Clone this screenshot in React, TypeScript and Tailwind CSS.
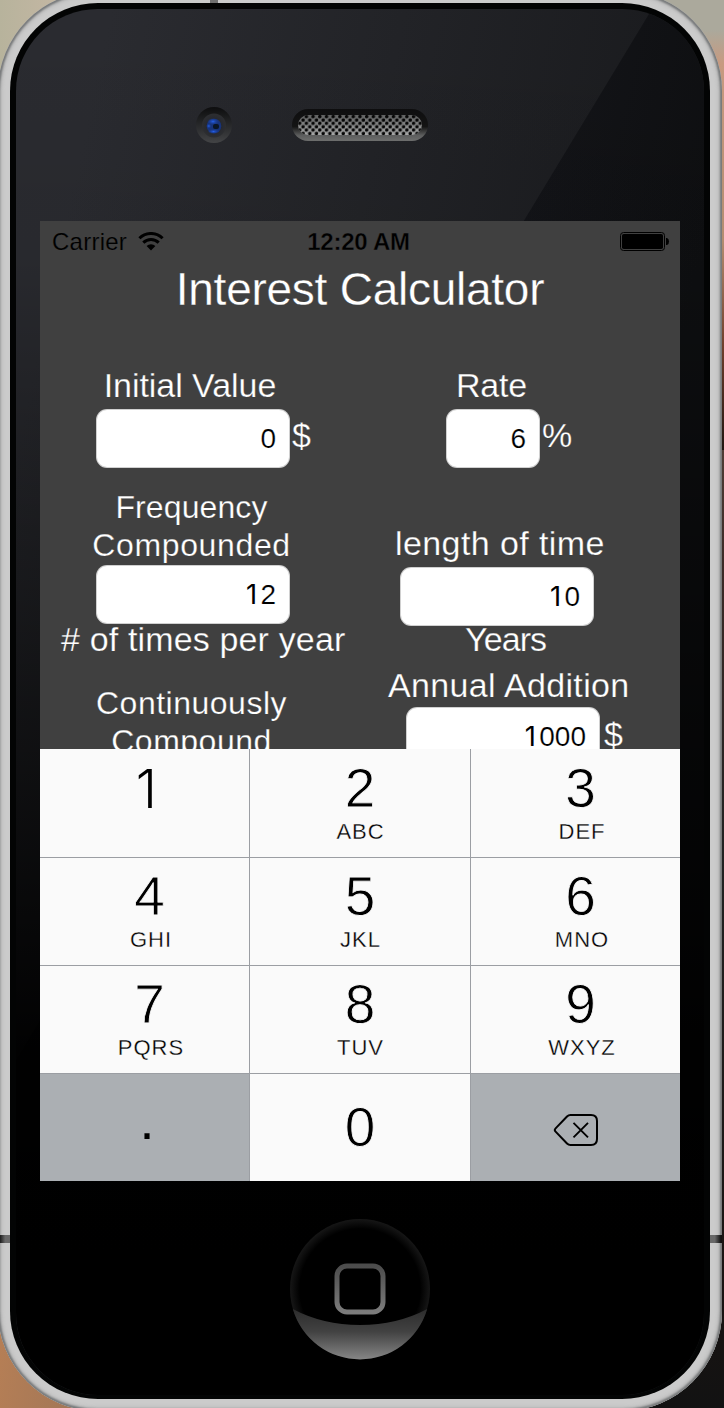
import React from "react";

const FONT = "font-['Liberation_Sans',Arial,sans-serif]";

// The footless "1" comes from Inter; every other figure uses the page font.
function Figures({ text }: { text: string }) {
  return (
    <span className="flex">
      {text.split("").map((c, i) =>
        c === "1" ? (
          <span
            key={i}
            className="w-[0.556em] pl-[0.03em] font-['Inter',sans-serif] text-[0.98em] font-normal [-webkit-text-stroke:0]"
          >
            1
          </span>
        ) : (
          <span key={i}>{c}</span>
        )
      )}
    </span>
  );
}

function Field({ value, width }: { value: string; width: string }) {
  return (
    <div
      className={`relative z-10 flex h-[59px] shrink-0 items-center justify-end rounded-[11px] border border-[#8a8a8a]/40 bg-white pr-[13px] text-[28px] leading-none text-black [-webkit-text-stroke:0.2px_#fff] ${width}`}
    >
      <Figures text={value} />
    </div>
  );
}

const THIN = "[-webkit-text-stroke:0.25px_#404040]";
const LABEL = `whitespace-nowrap text-[34px] leading-[40px] ${THIN}`;
const LABEL_SM = `whitespace-nowrap text-[32px] leading-[38px] ${THIN}`;

function WifiIcon() {
  return (
    <svg className="h-[19px] w-[26px]" viewBox="0 0 26 19">
      <path d="M13 18.5 L8.6 13.9 A6.4 6.4 0 0 1 17.4 13.9 Z" fill="#000" />
      <path d="M5.3 10.6 A10.9 10.9 0 0 1 20.7 10.6" fill="none" stroke="#000" strokeWidth="3" />
      <path d="M1.4 6.2 A16.6 16.6 0 0 1 24.6 6.2" fill="none" stroke="#000" strokeWidth="3" />
    </svg>
  );
}

function BatteryIcon() {
  return (
    <svg className="h-[19px] w-[50px]" viewBox="0 0 50 19">
      <rect x="0.5" y="0.5" width="44" height="18" rx="3" fill="none" stroke="#000" />
      <rect x="2" y="2" width="41" height="15" rx="1.8" fill="#000" />
      <path d="M46 6 h1 q2 0.5 2 3.5 q0 3 -2 3.5 h-1 Z" fill="#000" />
    </svg>
  );
}

function BackspaceIcon() {
  return (
    <svg className="h-[34px] w-[46px]" viewBox="0 0 46 34" fill="none" stroke="#000" strokeWidth="2">
      <path
        d="M17.5 2 H38 Q44 2 44 8 V26 Q44 32 38 32 H17.5 Q15.5 32 14 30.5 L2.6 18.6 Q1 17 2.6 15.4 L14 3.5 Q15.5 2 17.5 2 Z"
        strokeLinejoin="round"
      />
      <path d="M20.5 9.8 L35 24.3 M35 9.8 L20.5 24.3" strokeWidth="1.9" />
    </svg>
  );
}

function StatusBar() {
  return (
    <div className="flex h-[40px] items-center text-[24px] leading-none text-black">
      <div className="flex w-[213px] items-center pl-[12px]">
        <span className="w-[86px] pt-[2px] tracking-[0.25px] [-webkit-text-stroke:0.2px_#404040]">Carrier</span>
        <WifiIcon />
      </div>
      <div className="flex-1 pt-[2px] text-center font-bold tracking-[-0.25px] whitespace-nowrap [-webkit-text-stroke:0.4px_#404040]">
        12:20 AM
      </div>
      <div className="flex w-[216px] justify-end pr-[10px]">
        <BatteryIcon />
      </div>
    </div>
  );
}

function Form() {
  return (
    <div className="flex text-white">
      <div className="flex w-[300px] shrink-0 flex-col pt-[48px]">
        <div className={`${LABEL} mb-[4px] text-center tracking-[-0.05px]`}>Initial Value</div>
        <div className="flex pl-[56px]">
          <Field value="0" width="w-[194px]" />
          <span className={`${LABEL} ml-[2px] mt-[6px]`}>$</span>
        </div>
        <div className={`${LABEL_SM} mt-[20px] pl-[3px] text-center`}>
          <span className="tracking-[0.1px]">Frequency</span>
          <br />
          <span className="tracking-[0.65px]">Compounded</span>
        </div>
        <div className="mt-[1px] flex pl-[56px]">
          <Field value="12" width="w-[194px]" />
        </div>
        <div className={`${LABEL} -mt-[5px] pl-[21px] tracking-[0.15px]`}># of times per year</div>
        <div className={`${LABEL_SM} mt-[25px] pl-[3px] text-center tracking-[0.5px]`}>
          Continuously
          <br />
          Compound
        </div>
      </div>
      <div className="flex w-[340px] flex-col pt-[48px]">
        <div className={`${LABEL} mb-[4px] pl-[116px] tracking-[-0.2px]`}>Rate</div>
        <div className="flex pl-[106px]">
          <Field value="6" width="w-[94px]" />
          <span className={`${LABEL} ml-[2px] mt-[6px]`}>%</span>
        </div>
        <div className={`${LABEL} mt-[55px] pl-[55px] tracking-[0.4px]`}>length of time</div>
        <div className="mt-[4px] flex pl-[60px]">
          <Field value="10" width="w-[194px]" />
        </div>
        <div className={`${LABEL} -mt-[7px] pl-[125px] tracking-[-0.9px]`}>Years</div>
        <div className={`${LABEL} mt-[6px] pl-[48px] tracking-[0.35px]`}>Annual Addition</div>
        <div className="mt-[2px] flex pl-[66px]">
          <Field value="1000" width="w-[194px]" />
          <span className={`${LABEL} ml-[4px] mt-[7px]`}>$</span>
        </div>
      </div>
    </div>
  );
}

const KEYS: [string, string][] = [
  ["1", ""],
  ["2", "ABC"],
  ["3", "DEF"],
  ["4", "GHI"],
  ["5", "JKL"],
  ["6", "MNO"],
  ["7", "PQRS"],
  ["8", "TUV"],
  ["9", "WXYZ"],
];

const DIGIT = "text-[55px] leading-[60px] [-webkit-text-stroke:0.8px_#fafafa]";
const DIGIT_ONE = "-ml-[6px] pt-[2px] font-['Inter',sans-serif] text-[54px] leading-[58px] font-light";

function Keypad() {
  return (
    <div className="grid h-[432px] grid-cols-[210px_221px_209px] grid-rows-4 bg-[#fafafa] text-black">
      {KEYS.map(([digit, letters], i) => (
        <div
          key={digit}
          className={`flex flex-col items-center ${i > 2 ? "border-t border-[#9b9ea3] pt-[8px]" : "pt-[9px]"} ${
            i % 3 < 2 ? "border-r border-r-[#9b9ea3]" : ""
          } ${i % 3 !== 1 ? "pl-[10px]" : ""}`}
        >
          <span className={digit === "1" ? DIGIT_ONE : DIGIT}>{digit}</span>
          <span
            className={`mt-[1px] text-[22px] leading-[26px] tracking-[1px] [-webkit-text-stroke:0.3px_#fafafa] ${
              i % 3 !== 1 ? "pl-[3px]" : "pl-[1px]"
            }`}
          >
            {letters}
          </span>
        </div>
      ))}
      <div className="flex justify-center border-t border-r border-[#9b9ea3] bg-[#abafb3] pt-[16px] pl-[5px] text-[54px] leading-[60px]">
        .
      </div>
      <div className="flex justify-center border-t border-r border-[#9b9ea3] pt-[23px]">
        <span className={DIGIT}>0</span>
      </div>
      <div className="border-t border-[#9b9ea3] bg-[#abafb3] pt-[39px] pl-[82px]">
        <BackspaceIcon />
      </div>
    </div>
  );
}

function Glass() {
  return (
    <svg className="absolute inset-0 h-[1396px] w-[700px]" viewBox="10 3 700 1396">
      <defs>
        <linearGradient id="lit" gradientUnits="userSpaceOnUse" x1="100" y1="60" x2="660" y2="180">
          <stop offset="0" stopColor="#2a2b30" />
          <stop offset="0.5" stopColor="#222327" />
          <stop offset="1" stopColor="#1a1b1e" />
        </linearGradient>
        <linearGradient id="shade" gradientUnits="userSpaceOnUse" x1="524" y1="200" x2="704" y2="240">
          <stop offset="0" stopColor="#131418" />
          <stop offset="1" stopColor="#0e0f11" />
        </linearGradient>
        <linearGradient id="fade" x1="0" y1="0" x2="0" y2="1">
          <stop offset="0" stopColor="#000" stopOpacity="0" />
          <stop offset="0.18" stopColor="#000" stopOpacity="0.05" />
          <stop offset="0.75" stopColor="#000" stopOpacity="0.95" />
          <stop offset="0.9" stopColor="#000" />
        </linearGradient>
        <clipPath id="pane">
          <rect x="16" y="9" width="688" height="1386" rx="82" />
        </clipPath>
      </defs>
      <g clipPath="url(#pane)">
        <rect x="16" y="9" width="688" height="1386" fill="url(#lit)" />
        <path d="M652 9 L704 9 V1395 H16 V1060 Z" fill="url(#shade)" />
        <rect x="16" y="9" width="688" height="1386" fill="url(#fade)" />
      </g>
    </svg>
  );
}

function Camera() {
  return (
    <svg className="h-[36px] w-[36px]" viewBox="0 0 36 36">
      <defs>
        <linearGradient id="lensRim" x1="0" y1="0" x2="0" y2="1">
          <stop offset="0" stopColor="#0d0d0e" />
          <stop offset="0.5" stopColor="#27282a" />
          <stop offset="1" stopColor="#434446" />
        </linearGradient>
        <radialGradient id="lens">
          <stop offset="0" stopColor="#16223c" />
          <stop offset="0.55" stopColor="#26282e" />
          <stop offset="1" stopColor="#2d2e31" />
        </radialGradient>
        <radialGradient id="glint">
          <stop offset="0" stopColor="#2560ea" />
          <stop offset="1" stopColor="#173a92" stopOpacity="0" />
        </radialGradient>
      </defs>
      <circle cx="18" cy="18" r="18" fill="url(#lensRim)" />
      <circle cx="18" cy="18.5" r="12" fill="url(#lens)" />
      <circle cx="18" cy="19" r="7.3" fill="#17337a" />
      <ellipse cx="17" cy="14.5" rx="6" ry="3.5" fill="url(#glint)" />
      <circle cx="12.8" cy="19" r="2.6" fill="url(#glint)" />
      <ellipse cx="17.5" cy="24.5" rx="6" ry="2.6" fill="url(#glint)" />
      <rect x="17" y="17" width="6" height="5" rx="2" fill="#0a1626" />
    </svg>
  );
}

function Speaker() {
  return (
    <svg className="h-[32px] w-[136px]" viewBox="0 0 136 32">
      <defs>
        <linearGradient id="slot" x1="0" y1="0" x2="0" y2="1">
          <stop offset="0" stopColor="#0e0e0f" />
          <stop offset="0.55" stopColor="#141414" />
          <stop offset="0.82" stopColor="#5c5d5d" />
          <stop offset="1" stopColor="#6d6e6d" />
        </linearGradient>
        <linearGradient id="metal" x1="0" y1="0" x2="0" y2="1">
          <stop offset="0" stopColor="#606161" />
          <stop offset="1" stopColor="#a6a7a7" />
        </linearGradient>
        <pattern id="mesh" width="6.7" height="6.7" patternUnits="userSpaceOnUse" x="6" y="6">
          <circle cx="1.7" cy="1.7" r="1.75" fill="#050505" />
          <circle cx="5.05" cy="5.05" r="1.75" fill="#050505" />
        </pattern>
      </defs>
      <rect width="136" height="32" rx="16" fill="url(#slot)" />
      <rect x="6" y="6" width="124" height="20" rx="10" fill="url(#metal)" />
      <rect x="6" y="6" width="124" height="20" rx="10" fill="url(#mesh)" />
    </svg>
  );
}

function HomeButton() {
  return (
    <svg className="h-[142px] w-[142px]" viewBox="0 0 142 142">
      <defs>
        <radialGradient id="edge" cx="0.5" cy="0.5" r="0.5">
          <stop offset="0.86" stopColor="#000" />
          <stop offset="1" stopColor="#161616" />
        </radialGradient>
        <linearGradient id="shine" x1="0" y1="0" x2="0" y2="1">
          <stop offset="0" stopColor="#2c2c2c" />
          <stop offset="0.45" stopColor="#424242" />
          <stop offset="1" stopColor="#868686" />
        </linearGradient>
        <linearGradient id="ring" x1="0" y1="0" x2="0" y2="1">
          <stop offset="0" stopColor="#4c4c4c" />
          <stop offset="1" stopColor="#7c7c7c" />
        </linearGradient>
      </defs>
      <circle cx="71" cy="71" r="70" fill="url(#edge)" />
      <path d="M3.8 91 Q34 107 71 107 Q108 107 138.2 91 A70 70 0 0 1 3.8 91 Z" fill="url(#shine)" />
      <rect x="48" y="48" width="46" height="46" rx="10" fill="none" stroke="url(#ring)" strokeWidth="5" />
    </svg>
  );
}

export default function App() {
  return (
    <div
      className={`relative h-[1408px] w-[724px] overflow-hidden bg-[linear-gradient(180deg,#bab3a3_0%,#c9b2a0_3%,#b9a793_7%,#6b5a4c_20%,#3c2a26_40%,#222_60%,#1a1412_90%,#121212_100%)] ${FONT}`}
    >
      <div className="absolute top-0 left-0 h-[160px] w-[100px] bg-[linear-gradient(90deg,#b7b39c,#cdb9a8)]" />
      <div className="absolute bottom-0 left-0 h-[160px] w-[110px] bg-[linear-gradient(100deg,#b98055,#9a7358)]" />
      <div className="absolute top-0 right-0 h-[30px] w-[100px] bg-[#aba99c]" />
      <div className="absolute top-[30px] right-0 h-[420px] w-[50px] bg-[linear-gradient(180deg,#aba99c,#c79a80_8%,#b38d70_50%,#70402c_75%,#201510)]" />
      <div className="relative -mt-[9px] -ml-[2px] h-[1420px] w-[724px] rounded-[100px] bg-[#cbcbcb] pt-[12px] pl-[12px] shadow-[inset_0_0_2px_2px_#77797a,inset_0_0_4px_3px_#b0b0b0]">
        <div className="absolute top-[9px] left-[212px] h-[5px] w-[8px] bg-[#707070]" />
        <div className="absolute top-[1244px] left-0 h-[8px] w-[12px] bg-[linear-gradient(90deg,#222_20%,#686868_60%)]" />
        <div className="absolute top-[1244px] right-0 h-[8px] w-[12px] bg-[linear-gradient(270deg,#111_10%,#686868_60%)]" />
        <div className="relative h-[1396px] w-[700px] overflow-hidden rounded-[88px] bg-[#030404]">
          <Glass />
          <div className="relative flex flex-col">
            <div className="flex h-[218px] pt-[104px] pl-[186px]">
              <Camera />
              <div className="mt-[2px] ml-[60px]">
                <Speaker />
              </div>
            </div>
            <div className="ml-[30px] w-[640px]">
              <div className="h-[528px] overflow-hidden bg-[#404040]">
                <StatusBar />
                <h1 className="h-[56px] text-center text-[46px] leading-[56px] tracking-[-0.25px] text-white [-webkit-text-stroke:0.3px_#404040]">
                  Interest Calculator
                </h1>
                <Form />
              </div>
              <Keypad />
            </div>
            <div className="flex justify-center pt-[37px]">
              <HomeButton />
            </div>
          </div>
        </div>
      </div>
    </div>
  );
}
